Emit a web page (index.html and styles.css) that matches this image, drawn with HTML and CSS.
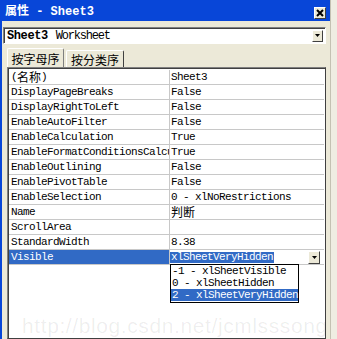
FILE: index.html
```html
<!DOCTYPE html>
<html>
<head>
<meta charset="utf-8">
<link rel="stylesheet" href="styles.css">
</head>
<body>
<div class="screen">
  <div class="win">
    <div class="title">
      <span class="title-text"><span class="cjk">属性</span> - Sheet3</span>
      <span class="close"><svg width="8" height="8" viewBox="0 0 8 8"><path d="M1 1L7 7M7 1L1 7" stroke="#000" stroke-width="2"/></svg></span>
    </div>
    <div class="content">
      <div class="combo">
        <span class="combo-text"><b>Sheet3</b> Worksheet</span>
        <span class="dd"><svg width="5" height="3" viewBox="0 0 5 3"><path d="M0 0H5L2.5 3Z" fill="#000"/></svg></span>
      </div>
      <div class="tabs">
        <div class="tab active"><span class="cjk">按字母序</span></div>
        <div class="tab"><span class="cjk">按分类序</span></div>
      </div>
      <div class="grid">
        <div class="row"><div class="name">(<span class="cjk">名称</span>)</div><div class="val">Sheet3</div></div>
        <div class="row"><div class="name">DisplayPageBreaks</div><div class="val">False</div></div>
        <div class="row"><div class="name">DisplayRightToLeft</div><div class="val">False</div></div>
        <div class="row"><div class="name">EnableAutoFilter</div><div class="val">False</div></div>
        <div class="row"><div class="name">EnableCalculation</div><div class="val">True</div></div>
        <div class="row"><div class="name">EnableFormatConditionsCalculation</div><div class="val">True</div></div>
        <div class="row"><div class="name">EnableOutlining</div><div class="val">False</div></div>
        <div class="row"><div class="name">EnablePivotTable</div><div class="val">False</div></div>
        <div class="row"><div class="name">EnableSelection</div><div class="val">0 - xlNoRestrictions</div></div>
        <div class="row"><div class="name">Name</div><div class="val"><span class="cjk">判断</span></div></div>
        <div class="row"><div class="name">ScrollArea</div><div class="val"></div></div>
        <div class="row"><div class="name">StandardWidth</div><div class="val">8.38</div></div>
        <div class="row sel"><div class="name">Visible</div><div class="val edit"><span class="hl">xlSheetVeryHidden</span><span class="dd small"><svg width="5" height="3" viewBox="0 0 5 3"><path d="M0 0H5L2.5 3Z" fill="#000"/></svg></span></div></div>
      </div>
    </div>
  </div>
  <div class="side"></div>
  <div class="list">
    <div class="item">-1 - xlSheetVisible</div>
    <div class="item">0 - xlSheetHidden</div>
    <div class="item on">2 - xlSheetVeryHidden</div>
  </div>
  <div class="watermark">http://blog.csdn.net/jcmlsssong</div>
</div>
</body>
</html>
```
FILE: styles.css
```css
html, body {
  margin: 0;
  padding: 0;
}
body {
  width: 337px;
  height: 339px;
  overflow: hidden;
  background: #ece9d8;
  font-family: "Liberation Mono", "Noto Sans CJK SC", monospace;
  font-size: 11px;
  letter-spacing: -0.6px;
  color: #000;
}
.cjk {
  font-family: "Noto Sans CJK SC", sans-serif;
  font-size: 12px;
  letter-spacing: 0;
}
.row .cjk {
  line-height: 14px;
  display: inline-block;
  vertical-align: top;
}
.screen {
  position: relative;
  display: flex;
  width: 337px;
  height: 339px;
}
.win {
  width: 330px;
  height: 339px;
  box-sizing: border-box;
  border-left: 2px solid #0846d8;
  display: flex;
  flex-direction: column;
}
.side {
  flex: 1;
  border-left: 1px solid #c4c1b2;
  background: #efede2;
}
.title {
  height: 21px;
  flex: none;
  background: #0846d8;
  display: flex;
  align-items: center;
  padding-left: 3px;
  color: #fff;
  font-weight: bold;
  font-size: 12px;
  letter-spacing: 0;
}
.title .cjk {
  font-weight: bold;
}
.title-text {
  line-height: 14px;
}
.close {
  margin-left: auto;
  margin-right: 4px;
  width: 12px;
  height: 12px;
  box-sizing: border-box;
  background: #ece9d8;
  border: 1px solid;
  border-color: #fff #404040 #404040 #fff;
  display: flex;
  align-items: center;
  justify-content: center;
  margin-top: 4px;
}
.content {
  flex: 1;
  display: flex;
  flex-direction: column;
  padding: 6px 4px 0 1px;
  min-height: 0;
}
.combo {
  height: 17px;
  flex: none;
  box-sizing: border-box;
  background: #fff;
  border: 1px solid;
  border-color: #808080 #fff #fff #808080;
  box-shadow: inset 1px 1px #404040;
  display: flex;
  align-items: center;
  padding-left: 3px;
  font-size: 12px;
  letter-spacing: -1.2px;
}
.combo b {
  letter-spacing: -0.4px;
  margin-right: 2px;
}
.dd {
  margin-left: auto;
  margin-right: 2px;
  width: 11px;
  height: 12px;
  box-sizing: border-box;
  background: #ece9d8;
  border: 1px solid;
  border-color: #fff #404040 #404040 #fff;
  display: flex;
  align-items: center;
  justify-content: center;
}
.tabs {
  display: flex;
  align-items: flex-end;
  margin-top: 4px;
  padding-left: 4px;
  height: 19px;
  flex: none;
}
.tab {
  height: 17px;
  box-sizing: border-box;
  border: 1px solid;
  border-bottom: none;
  border-color: #fff #404040 transparent #fff;
  border-radius: 2px 2px 0 0;
  display: flex;
  align-items: center;
  justify-content: center;
  width: 58px;
}
.tab.active {
  height: 19px;
  width: 57px;
  border-right-color: #808080;
  margin-right: 2px;
}
.grid {
  flex: 1;
  margin-left: 4px;
  margin-right: 0;
  box-sizing: border-box;
  background: #fff;
  border: 1px solid;
  border-color: #808080 #404040 #404040 #808080;
  box-shadow: inset 1px 1px #404040;
  padding: 2px 1px 0 1px;
}
.row {
  display: flex;
  height: 15px;
  box-sizing: border-box;
  border-bottom: 1px solid #c8c8c8;
  line-height: 14px;
}
.name {
  width: 161px;
  flex: none;
  border-right: 1px solid #c8c8c8;
  padding-left: 2px;
  box-sizing: border-box;
  overflow: hidden;
  white-space: nowrap;
}
.val {
  flex: 1;
  padding-left: 1px;
  white-space: nowrap;
  overflow: hidden;
}
.sel .name {
  background: #316ac5;
  color: #fff;
}
.edit {
  display: flex;
  align-items: center;
  padding-left: 0;
}
.hl {
  display: inline-block;
  height: 11px;
  line-height: 11px;
  background: #316ac5;
  color: #fff;
  padding: 0 1px;
}
.dd.small {
  width: 12px;
  height: 13px;
  margin-right: 4px;
}
.list {
  position: absolute;
  left: 170px;
  top: 264px;
  width: 129px;
  box-sizing: border-box;
  border: 1px solid #000;
  background: #fff;
  padding-bottom: 1px;
}
.item {
  height: 12px;
  line-height: 12px;
  padding-left: 1px;
  white-space: nowrap;
}
.item.on {
  background: #316ac5;
  color: #fff;
}
.watermark {
  position: absolute;
  left: 22px;
  top: 314px;
  font-family: "Liberation Sans", sans-serif;
  font-size: 21px;
  letter-spacing: 0.6px;
  color: rgba(0, 0, 0, 0.07);
  white-space: nowrap;
  pointer-events: none;
}
```
